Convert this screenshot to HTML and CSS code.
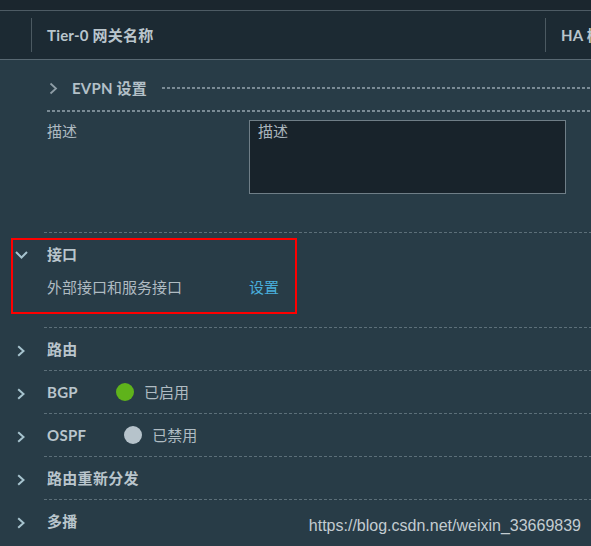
FILE: index.html
```html
<!DOCTYPE html>
<html lang="zh-CN">
<head>
<meta charset="utf-8">
<title>Tier-0 网关</title>
<link rel="stylesheet" href="styles.css">
</head>
<body>
<div class="page">
  <div class="topbar"></div>
  <div class="thead">
    <div class="th th-first"></div>
    <div class="th th-name">Tier-0 网关名称</div>
    <div class="th th-ha">HA 模式</div>
  </div>

  <div class="content">
    <div class="evpn">
      <div class="evpn-head">
        <svg class="chev-evpn" width="9" height="13" viewBox="0 0 9 13"><polyline points="1.5,1.5 7,6.5 1.5,11.5" fill="none" stroke="#8e9da6" stroke-width="1.8"/></svg>
        <span class="evpn-title">EVPN 设置</span>
        <span class="evpn-dots"></span>
      </div>
    </div>

    <div class="desc-row">
      <div class="desc-label">描述</div>
      <div class="textarea">描述</div>
    </div>

    <div class="iface">
      <div class="callout">
        <div class="iface-head">
          <span class="iface-chev"><svg width="13" height="8" viewBox="0 0 13 8"><polyline points="1,1 6.5,6.5 12,1" fill="none" stroke="#a6c3ce" stroke-width="2"/></svg></span>
          <span class="iface-title">接口</span>
        </div>
        <div class="iface-sub">
          <span class="iface-label">外部接口和服务接口</span>
          <span class="link">设置</span>
        </div>
      </div>
    </div>

    <div class="row">
      <span class="row-chev"><svg width="8" height="12" viewBox="0 0 8 12"><polyline points="1.2,1.2 6.5,6 1.2,10.8" fill="none" stroke="#a6c3ce" stroke-width="2"/></svg></span>
      <div class="row-main"><span class="row-title">路由</span></div>
    </div>
    <div class="row">
      <span class="row-chev"><svg width="8" height="12" viewBox="0 0 8 12"><polyline points="1.2,1.2 6.5,6 1.2,10.8" fill="none" stroke="#a6c3ce" stroke-width="2"/></svg></span>
      <div class="row-main"><span class="row-title">BGP</span><span class="dot dot-on"></span><span class="status">已启用</span></div>
    </div>
    <div class="row">
      <span class="row-chev"><svg width="8" height="12" viewBox="0 0 8 12"><polyline points="1.2,1.2 6.5,6 1.2,10.8" fill="none" stroke="#a6c3ce" stroke-width="2"/></svg></span>
      <div class="row-main"><span class="row-title">OSPF</span><span class="dot dot-off"></span><span class="status">已禁用</span></div>
    </div>
    <div class="row">
      <span class="row-chev"><svg width="8" height="12" viewBox="0 0 8 12"><polyline points="1.2,1.2 6.5,6 1.2,10.8" fill="none" stroke="#a6c3ce" stroke-width="2"/></svg></span>
      <div class="row-main"><span class="row-title">路由重新分发</span></div>
    </div>
    <div class="row row-last">
      <span class="row-chev"><svg width="8" height="12" viewBox="0 0 8 12"><polyline points="1.2,1.2 6.5,6 1.2,10.8" fill="none" stroke="#a6c3ce" stroke-width="2"/></svg></span>
      <div class="row-main"><span class="row-title">多播</span></div>
    </div>
  </div>

  <div class="watermark">https://blog.csdn.net/weixin_33669839</div>
</div>
</body>
</html>
```

FILE: styles.css
```css
html, body {
  margin: 0;
  padding: 0;
}
body {
  background: #283c47;
  font-family: Lato, "Noto Sans CJK SC", sans-serif;
  font-size: 15px;
  color: #b4c0c7;
}
.page {
  position: relative;
  width: 591px;
  height: 546px;
  overflow: hidden;
}
.topbar {
  height: 10px;
  background: #1b262e;
  border-bottom: 1px solid #4d5b64;
}
.thead {
  height: 48px;
  background: #1c2a33;
  border-bottom: 1px solid #586872;
  display: flex;
  align-items: center;
  white-space: nowrap;
}
.th {
  height: 34px;
  line-height: 34px;
  font-weight: 700;
  color: #b9c5cc;
  box-sizing: border-box;
  letter-spacing: 0.2px;
}
.th-first {
  width: 31px;
  flex: none;
}
.th-name {
  width: 514px;
  flex: none;
  border-left: 1px solid #4b5961;
  padding-left: 15px;
}
.th-ha {
  flex: none;
  border-left: 1px solid #4b5961;
  padding-left: 15px;
}
.content {
  display: flex;
  flex-direction: column;
}
.evpn {
  margin-left: 47px;
  padding-bottom: 2px;
  background-image: repeating-linear-gradient(to right, #7a8b95 0 3px, transparent 3px 5px);
  background-size: 100% 2px;
  background-position: 0 100%;
  background-repeat: no-repeat;
}
.evpn-head {
  height: 44px;
  margin-top: 6px;
  display: flex;
  align-items: center;
}
.chev-evpn {
  margin-left: 2px;
  flex: none;
}
.evpn-title {
  margin-left: 14px;
  font-weight: 700;
  color: #b3c0c8;
  line-height: 20px;
  white-space: nowrap;
  letter-spacing: 0.2px;
}
.evpn-dots {
  flex: 1;
  margin-left: 15px;
  height: 2px;
  background-image: repeating-linear-gradient(to right, #7a8b95 0 3px, transparent 3px 5px);
  margin-top: -1px;
}
.desc-row {
  margin-left: 44px;
  padding-left: 3px;
  padding-top: 8px;
  height: 121px;
  box-sizing: border-box;
  display: flex;
  align-items: flex-start;
  background-image: repeating-linear-gradient(to right, #5c6f79 0 3px, transparent 3px 5px);
  background-size: 100% 1px;
  background-position: 0 100%;
  background-repeat: no-repeat;
}
.desc-label {
  width: 202px;
  flex: none;
  line-height: 22px;
  color: #aebac1;
}
.textarea {
  width: 317px;
  height: 74px;
  box-sizing: border-box;
  background: #18232b;
  border: 1px solid #6f7e87;
  padding: 0 8px;
  line-height: 20px;
  color: #a9b4bb;
  flex: none;
}
.iface {
  padding-top: 5px;
  height: 95px;
  box-sizing: border-box;
  background-image: repeating-linear-gradient(to right, #5c6f79 0 3px, transparent 3px 5px);
  background-size: calc(100% - 44px) 1px;
  background-position: 44px 100%;
  background-repeat: no-repeat;
}
.callout {
  margin-left: 11px;
  width: 286px;
  height: 76px;
  box-sizing: border-box;
  border: 2px solid #ff0000;
  padding-bottom: 11px;
}
.iface-head {
  height: 28px;
  display: flex;
  align-items: center;
}
.iface-chev {
  width: 34px;
  flex: none;
  display: flex;
  padding-left: 2px;
  box-sizing: border-box;
  margin-top: 2px;
}
.iface-title {
  font-weight: 700;
  color: #b9c5cc;
  line-height: 20px;
}
.iface-sub {
  margin-top: 5px;
  height: 28px;
  display: flex;
  align-items: center;
  padding-left: 34px;
}
.iface-label {
  width: 202px;
  flex: none;
  color: #afbbc2;
  line-height: 20px;
}
.link {
  color: #49aedb;
  line-height: 20px;
}
.row {
  display: flex;
  height: 43px;
}
.row-chev {
  width: 44px;
  flex: none;
  display: flex;
  align-items: center;
  padding-left: 17px;
  box-sizing: border-box;
  padding-top: 3px;
}
.row-main {
  flex: 1;
  display: flex;
  align-items: center;
  padding-left: 3px;
  background-image: repeating-linear-gradient(to right, #5c6f79 0 3px, transparent 3px 5px);
  background-size: 100% 1px;
  background-position: 0 100%;
  background-repeat: no-repeat;
  padding-bottom: 1px;
}
.row-last .row-main {
  background-image: none;
}
.row-title {
  font-weight: 700;
  color: #b9c5cc;
  line-height: 20px;
  white-space: nowrap;
  letter-spacing: 0.3px;
}
.dot {
  width: 18px;
  height: 18px;
  border-radius: 50%;
  margin-left: 38px;
  margin-right: 10px;
  flex: none;
}
.dot-on {
  background: #5fb31b;
}
.dot-off {
  background: #b6c3cb;
}
.status {
  color: #b0bcc3;
  line-height: 20px;
}
.watermark {
  position: absolute;
  right: 10px;
  top: 517px;
  font-family: "Liberation Sans", Arial, sans-serif;
  font-size: 16px;
  line-height: 18px;
  color: #c3ccd1;
}
```
